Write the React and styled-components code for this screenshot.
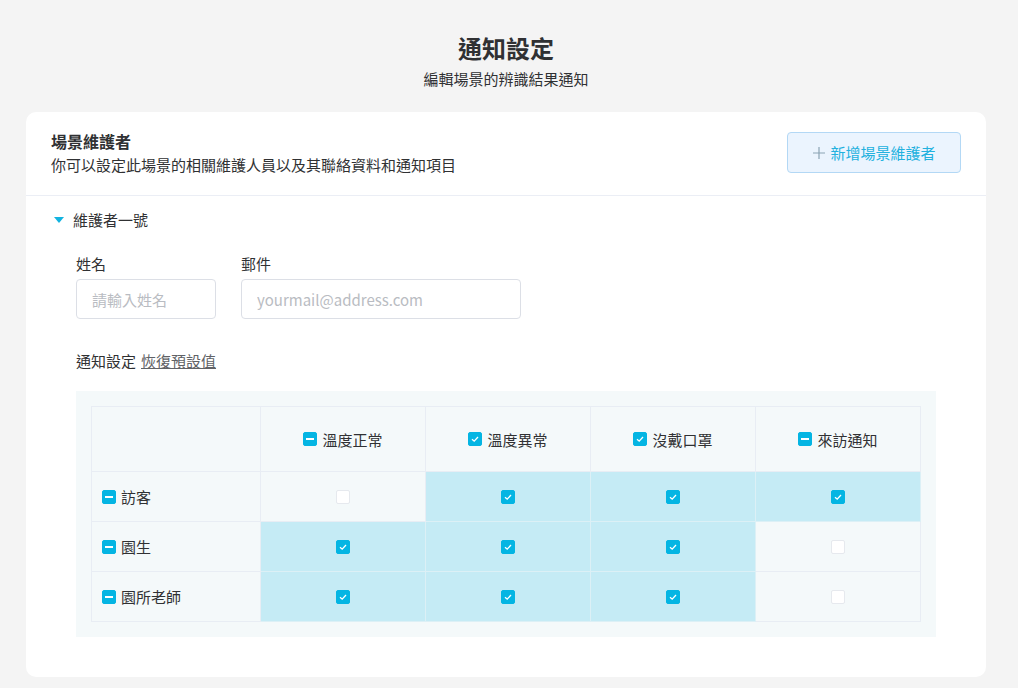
import { Fragment } from "react";
import styled, { createGlobalStyle } from "styled-components";

const GlobalStyle = createGlobalStyle`
  body {
    margin: 0;
    background: #f4f4f4;
    font-family: "Noto Sans CJK TC", "Noto Sans", sans-serif;
    color: #333;
  }
`;

const Page = styled.div`
  padding: 30px 32px 10px 26px;
  box-sizing: border-box;
  width: 1018px;
`;

const PageHead = styled.header`
  text-align: center;
  margin-bottom: 20px;
`;

const PageTitle = styled.h1`
  margin: 0;
  font-size: 24px;
  line-height: 36px;
  font-weight: 700;
  color: #303133;
`;

const PageSub = styled.p`
  margin: 0;
  font-size: 15px;
  line-height: 26px;
  color: #303133;
`;

const Card = styled.section`
  background: #fff;
  border-radius: 10px;
  width: 960px;
  padding-bottom: 40px;
`;

const CardHeader = styled.div`
  display: flex;
  align-items: center;
  justify-content: space-between;
  padding: 17px 25px 19px 25px;
  border-bottom: 1px solid #ebeef5;
`;

const SectionTitle = styled.h2`
  margin: 0;
  font-size: 16px;
  line-height: 24px;
  font-weight: 700;
  color: #303133;
`;

const SectionDesc = styled.p`
  margin: 1px 0 0;
  font-size: 15px;
  line-height: 22px;
  color: #303133;
`;

const AddButton = styled.button`
  width: 174px;
  height: 41px;
  background: #ebf4fe;
  border: 1px solid #b3d8f5;
  border-radius: 4px;
  color: #22b1de;
  font-family: inherit;
  font-size: 15px;
  display: flex;
  align-items: center;
  justify-content: center;
  gap: 4px;
`;

const Body = styled.div`
  padding: 13px 50px 0 26px;
`;

const CollapseTitle = styled.div`
  display: flex;
  align-items: center;
  gap: 9px;
  font-size: 15px;
  line-height: 22px;
  color: #303133;
`;

const Triangle = styled.span`
  width: 0;
  height: 0;
  margin-left: 2px;
  border-left: 5px solid transparent;
  border-right: 5px solid transparent;
  border-top: 6px solid #12b3e0;
`;

const Inner = styled.div`
  padding: 22px 0 0 24px;
`;

const FieldRow = styled.div`
  display: flex;
  gap: 25px;
`;

const Field = styled.label`
  display: flex;
  flex-direction: column;
  gap: 4px;
  font-size: 15px;
  line-height: 22px;
  color: #303133;
`;

const Input = styled.input`
  width: ${(p) => p.$w}px;
  height: 40px;
  box-sizing: border-box;
  border: 1px solid #dcdfe6;
  border-radius: 4px;
  padding: 0 15px;
  font-family: inherit;
  font-size: 15px;
  color: #303133;
  &::placeholder {
    color: #b9bcc2;
  }
`;

const NotifyLabel = styled.div`
  margin-top: 31px;
  font-size: 15px;
  line-height: 22px;
  color: #303133;
`;

const ResetLink = styled.a`
  color: #606266;
  text-decoration: underline;
  margin-left: 5px;
  cursor: pointer;
`;

const TableWrap = styled.div`
  margin-top: 19px;
  width: 860px;
  box-sizing: border-box;
  background: #f4f9fa;
  padding: 15px;
`;

const Grid = styled.div`
  display: grid;
  grid-template-columns: 169px repeat(4, 165px);
  grid-template-rows: 65px repeat(3, 50px);
  border-top: 1px solid #e8edf4;
  border-left: 1px solid #e8edf4;
`;

const Cell = styled.div`
  display: flex;
  align-items: center;
  justify-content: ${(p) => (p.$left ? "flex-start" : "center")};
  gap: 5px;
  padding-left: ${(p) => (p.$left ? "10px" : "0")};
  background: ${(p) => (p.$on ? "#c5ebf5" : "#f4f9fa")};
  border-right: 1px solid ${(p) => (p.$on ? "#dcf0f6" : "#e8edf4")};
  border-bottom: 1px solid ${(p) => (p.$on ? "#dcf0f6" : "#e8edf4")};
  font-size: 15px;
  color: #303133;
`;

const Box = styled.span`
  width: 14px;
  height: 14px;
  box-sizing: border-box;
  border-radius: 2px;
  background: ${(p) => (p.$state === "off" ? "#fff" : "#04b5e3")};
  border: 1px solid ${(p) => (p.$state === "off" ? "#e6e9ee" : "#04b5e3")};
  display: inline-flex;
  align-items: center;
  justify-content: center;
  flex: none;
`;

const Check = ({ state }) => (
  <Box $state={state}>
    {state === "on" && (
      <svg width="10" height="10" viewBox="0 0 10 10">
        <path d="M2 5.2 L4.2 7.2 L8 3" fill="none" stroke="#fff" strokeWidth="1.3" />
      </svg>
    )}
    {state === "mixed" && (
      <svg width="8" height="2" viewBox="0 0 8 2">
        <rect width="8" height="2" fill="#fff" />
      </svg>
    )}
  </Box>
);

const columns = [
  { name: "溫度正常", state: "mixed" },
  { name: "溫度異常", state: "on" },
  { name: "沒戴口罩", state: "on" },
  { name: "來訪通知", state: "mixed" },
];

const rows = [
  { name: "訪客", values: [false, true, true, true] },
  { name: "園生", values: [true, true, true, false] },
  { name: "園所老師", values: [true, true, true, false] },
];

export default function App() {
  return (
    <>
      <GlobalStyle />
      <Page>
        <PageHead>
          <PageTitle>通知設定</PageTitle>
          <PageSub>編輯場景的辨識結果通知</PageSub>
        </PageHead>
        <Card>
          <CardHeader>
            <div>
              <SectionTitle>場景維護者</SectionTitle>
              <SectionDesc>你可以設定此場景的相關維護人員以及其聯絡資料和通知項目</SectionDesc>
            </div>
            <AddButton>
              <svg width="14" height="14" viewBox="0 0 14 14">
                <path d="M7 1v12M1 7h12" stroke="#8ba3b3" strokeWidth="1.2" />
              </svg>
              新增場景維護者
            </AddButton>
          </CardHeader>
          <Body>
            <CollapseTitle>
              <Triangle />
              維護者一號
            </CollapseTitle>
            <Inner>
              <FieldRow>
                <Field>
                  姓名
                  <Input $w={140} placeholder="請輸入姓名" />
                </Field>
                <Field>
                  郵件
                  <Input $w={280} placeholder="yourmail@address.com" />
                </Field>
              </FieldRow>
              <NotifyLabel>
                通知設定<ResetLink>恢復預設值</ResetLink>
              </NotifyLabel>
              <TableWrap>
                <Grid>
                  <Cell />
                  {columns.map((c) => (
                    <Cell key={c.name}>
                      <Check state={c.state} />
                      {c.name}
                    </Cell>
                  ))}
                  {rows.map((r) => (
                    <Fragment key={r.name}>
                      <Cell $left>
                        <Check state="mixed" />
                        {r.name}
                      </Cell>
                      {r.values.map((v, i) => (
                        <Cell key={i} $on={v}>
                          <Check state={v ? "on" : "off"} />
                        </Cell>
                      ))}
                    </Fragment>
                  ))}
                </Grid>
              </TableWrap>
            </Inner>
          </Body>
        </Card>
      </Page>
    </>
  );
}
